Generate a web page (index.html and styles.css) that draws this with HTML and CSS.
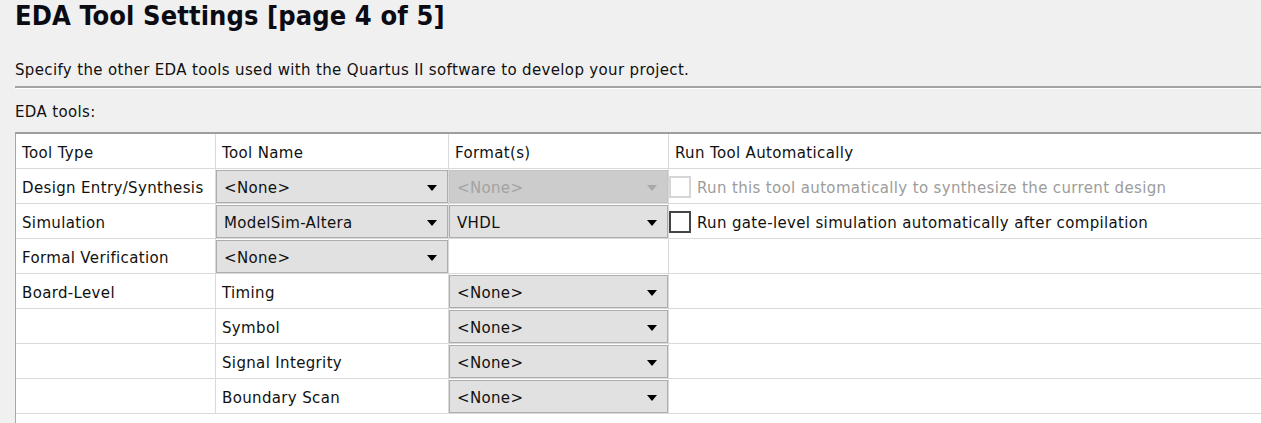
FILE: index.html
```html
<!DOCTYPE html>
<html>
<head>
<meta charset="utf-8">
<link rel="stylesheet" href="styles.css">
</head>
<body>
<div class="page">
  <h1 class="title">EDA Tool Settings [page 4 of 5]</h1>
  <p class="desc">Specify the other EDA tools used with the Quartus II software to develop your project.</p>
  <div class="sep"></div>
  <div class="label">EDA tools:</div>
  <div class="table">
    <div class="grid">
      <div class="cell c1">Tool Type</div>
      <div class="cell c2">Tool Name</div>
      <div class="cell c3">Format(s)</div>
      <div class="cell c4">Run Tool Automatically</div>

      <div class="cell c1">Design Entry/Synthesis</div>
      <div class="cell sc"><div class="select"><span>&lt;None&gt;</span><i class="arrow"></i></div></div>
      <div class="cell sc"><div class="select disabled"><span>&lt;None&gt;</span><i class="arrow"></i></div></div>
      <div class="cell c4 chk-cell disabled-text"><span class="check disabled"></span><span>Run this tool automatically to synthesize the current design</span></div>

      <div class="cell c1">Simulation</div>
      <div class="cell sc"><div class="select"><span>ModelSim-Altera</span><i class="arrow"></i></div></div>
      <div class="cell sc"><div class="select"><span>VHDL</span><i class="arrow"></i></div></div>
      <div class="cell c4 chk-cell"><span class="check"></span><span>Run gate-level simulation automatically after compilation</span></div>

      <div class="cell c1">Formal Verification</div>
      <div class="cell sc"><div class="select"><span>&lt;None&gt;</span><i class="arrow"></i></div></div>
      <div class="cell"></div>
      <div class="cell c4"></div>

      <div class="cell c1">Board-Level</div>
      <div class="cell c2">Timing</div>
      <div class="cell sc"><div class="select"><span>&lt;None&gt;</span><i class="arrow"></i></div></div>
      <div class="cell c4"></div>

      <div class="cell c1"></div>
      <div class="cell c2">Symbol</div>
      <div class="cell sc"><div class="select"><span>&lt;None&gt;</span><i class="arrow"></i></div></div>
      <div class="cell c4"></div>

      <div class="cell c1"></div>
      <div class="cell c2">Signal Integrity</div>
      <div class="cell sc"><div class="select"><span>&lt;None&gt;</span><i class="arrow"></i></div></div>
      <div class="cell c4"></div>

      <div class="cell c1"></div>
      <div class="cell c2">Boundary Scan</div>
      <div class="cell sc"><div class="select"><span>&lt;None&gt;</span><i class="arrow"></i></div></div>
      <div class="cell c4"></div>
    </div>
  </div>
</div>
</body>
</html>
```
FILE: styles.css
```css
html, body {
  margin: 0;
  padding: 0;
  overflow: hidden;
  background: #f0f0f0;
}
body {
  font-family: "DejaVu Sans", sans-serif;
  font-size: 15px;
  letter-spacing: 0.35px;
  color: #111;
}
.page {
  padding-left: 15px;
}
.title {
  margin: 0;
  font-family: "DejaVu Sans Condensed", "DejaVu Sans", sans-serif;
  font-size: 27px;
  letter-spacing: 0.1px;
  font-weight: bold;
  line-height: 31px;
  color: #0b0b14;
}
.desc {
  margin: 0;
  padding-top: 30px;
  line-height: 18px;
}
.sep {
  margin-top: 7px;
  height: 0;
  border-top: 2px solid #a3a3a3;
  border-bottom: 1px solid #ffffff;
}
.label {
  margin-top: 14px;
  line-height: 18px;
}
.table {
  margin-top: 11px;
  background: #ffffff;
  border-top: 2px solid #9e9e9e;
  border-left: 1px solid #a8a8a8;
  padding-bottom: 9px;
}
.grid {
  display: grid;
  grid-template-columns: 200px 233px 220px 1fr;
  grid-auto-rows: 35px;
}
.cell {
  box-sizing: border-box;
  border-right: 1px solid #dadada;
  border-bottom: 1px solid #dadada;
  display: flex;
  align-items: center;
  white-space: nowrap;
  overflow: hidden;
  padding-top: 3px;
}
.c1 { padding-left: 6px; }
.c2 { padding-left: 6px; }
.c3 { padding-left: 6px; }
.c4 { border-right: none; padding-left: 6px; }
.sc {
  align-items: stretch;
  padding: 1px 0 0 0;
}
.select {
  flex: 1;
  box-sizing: border-box;
  border: 1px solid #adadad;
  background: #e1e1e1;
  display: flex;
  align-items: center;
  justify-content: space-between;
  padding: 2px 10px 0 7px;
  color: #111;
}
.select.disabled {
  background: #cccccc;
  border-color: #c4c4c4;
  color: #a3a3a3;
}
.arrow {
  width: 0;
  height: 0;
  border-left: 5.5px solid transparent;
  border-right: 5.5px solid transparent;
  border-top: 6px solid #000;
}
.select.disabled .arrow {
  border-top-color: #a8a8a8;
}
.chk-cell {
  padding-left: 0;
  padding-top: 1px;
  gap: 6px;
}
.chk-cell > span:last-child {
  padding-top: 2px;
}
.check {
  width: 22px;
  height: 22px;
  box-sizing: border-box;
  border: 2px solid #454545;
  background: #fff;
  flex: none;
}
.check.disabled {
  border-color: #d6d6d6;
}
.disabled-text {
  color: #9c9c9c;
}
```
